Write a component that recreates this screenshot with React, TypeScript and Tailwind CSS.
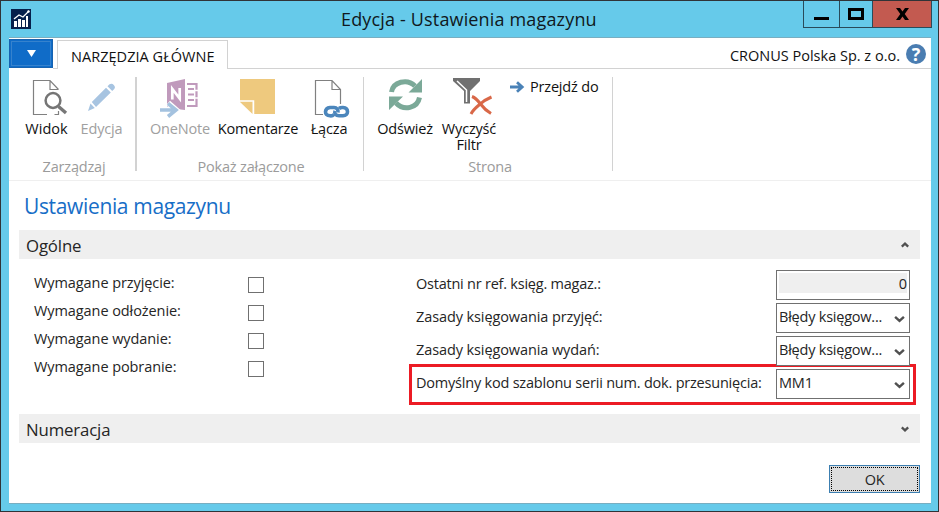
import type { ReactNode } from "react";

function Label({ children, className = "" }: { children: ReactNode; className?: string }) {
  return <span className={`block whitespace-nowrap ${className}`}>{children}</span>;
}

function PageIcon({ kind }: { kind: "view" | "link" }) {
  return (
    <svg width="40" height="40" viewBox="0 0 40 40" fill="none" className="block shrink-0">
      <path d={kind === "view" ? "M16 35.5H2.5V1.5H19L27.5 10.5M27.5 32V35.5H23.5M19 1.5V10.5H27.5" : "M13 35.5H5.5V1.5H22L30.5 10.5V25M22 1.5V10.5H30.5"} stroke="#808080" strokeWidth="1.2" />
      {kind === "view" ? (
        <>
          <circle cx="22" cy="21.5" r="7.4" fill="#fff" stroke="#757575" strokeWidth="2.5" />
          <path d="M27.5 27.5L35 34" stroke="#777" strokeWidth="3.4" />
        </>
      ) : (
        <>
          <rect x="14" y="26" width="26" height="13" rx="6" fill="#fff" />
          <g stroke="#4b86bc" strokeWidth="3.6">
            <path d="M24 35.5C22.5 37 21 37 20 36.8C13.5 36.5 14.5 29 20 28.5H24C27 28.5 28.5 31 28 33.5" />
            <path d="M29 29.5C30.5 28.3 31.5 28.4 33 28.5C39 29 39 36.5 33 36.8H29C26 36.8 24 34.5 25 31.8" />
          </g>
        </>
      )}
    </svg>
  );
}

function PencilIcon() {
  return (
    <svg width="30" height="36" viewBox="0 0 30 36" className="block" fill="#a7c4e1">
      <path d="M1 28L3.5 20.5L7.8 25ZM4.8 19L19 4.8L23.8 9.4L9 24ZM20.5 3.3L22.5 1.3Q24.8 -.2 26.8 1.9Q28.8 4.2 27.3 6L25.2 8Z" />
    </svg>
  );
}

function OneNoteIcon() {
  return (
    <svg width="40" height="40" viewBox="0 0 40 40" className="block" fill="none">
      <path d="M7 4L25 0V31L7 29Z" fill="#c09abc" />
      <path d="M12.3 20.5V10L19.7 19.5V9" stroke="#fff" strokeWidth="2.7" />
      <path d="M27 5H36.5V27H27M28 10H34M28 15.5H34M28 21H34" stroke="#c09abc" strokeWidth="2.2" />
      <path d="M34 11.5H38M34 19H38" stroke="#fff" strokeWidth="1.5" />
      <path d="M0 31H16M8 24L16 31L8 38" stroke="#fff" strokeWidth="6" />
      <path d="M0 31H15M8 24.5L16 31L8 37.5" stroke="#a4c2df" strokeWidth="3.6" />
    </svg>
  );
}

function NoteIcon() {
  return (
    <svg width="36" height="36" viewBox="0 0 36 36" className="block">
      <path d="M0 0H35V35H13V23H0Z" fill="#eec97e" />
      <path d="M0 22H13.5V35" fill="none" stroke="#fff" strokeWidth="1.5" />
      <path d="M0 23H12.5V35Z" fill="#eec97e" />
    </svg>
  );
}

function RefreshIcon() {
  return (
    <svg width="36" height="36" viewBox="0 0 36 36" className="block" fill="none">
      <g stroke="#7ba998" strokeWidth="5">
        <path d="M3.5 14C5 4 19 0 27 8" />
        <path d="M31.5 19.5C29.5 30 16 33.5 8 25" />
      </g>
      <path d="M34 1V14.5H20.5ZM1 32V18.5H15Z" fill="#7ba998" />
    </svg>
  );
}

function FilterIcon() {
  return (
    <svg width="40" height="40" viewBox="0 0 40 40" className="block" fill="none">
      <path d="M0 0H27V3L17 13V25.5H11V13L0 3Z" fill="#707070" />
      <path d="M4 3L13.5 12V24" stroke="#fff" strokeWidth="1.5" />
      <path d="M19 18.5Q23 20 27.5 26Q32 32 38 35.5M38.5 19Q31 22 26 27Q20 32 18 36" stroke="#fff" strokeWidth="5" />
      <path d="M19 18.5Q23 20 27.5 26Q32 32 38 35.5M38.5 19Q31 22 26 27Q20 32 18 36" stroke="#d96848" strokeWidth="3" />
    </svg>
  );
}

function Chevron({ up = false, small = false }: { up?: boolean; small?: boolean }) {
  return (
    <svg width={small ? 8 : 11} height={small ? 6 : 8} viewBox="0 0 10 7" fill="none" className="block shrink-0">
      <path d={up ? "M1 5.5L5 1.8L9 5.5" : "M1 1.5L5 5.2L9 1.5"} stroke="#505050" strokeWidth={small ? 2.9 : 2.2} />
    </svg>
  );
}

function ComboBox({ value }: { value: string }) {
  return (
    <div className="flex h-[30px] w-[134px] items-start justify-between border border-[#707070] bg-white pr-[4px] pl-[2px]">
      <Label className="pt-[3px] leading-[20px] tracking-[-0.22px]">{value}</Label>
      <div className="pt-[11px]"><Chevron /></div>
    </div>
  );
}

function SectionBar({ title, open = false }: { title: string; open?: boolean }) {
  return (
    <div className="flex h-[29px] items-center justify-between bg-[#efefef] pr-[11px] pl-[7px]">
      <Label className="pt-[2px] text-[16.8px] leading-[26px] tracking-[-0.15px]">{title}</Label>
      <Chevron up={open} small />
    </div>
  );
}

function TitleBar() {
  return (
    <header className="flex h-[36px] shrink-0 justify-between pr-[6px]">
      <div className="w-[340px] pt-[8px] pl-[10px]">
        <svg width="20" height="20" viewBox="0 0 20 20" className="block">
          <path d="M0 0H20V20H0Z" fill="#06204c" />
          <path d="M3 12H6V18H3ZM7 10H10V18H7ZM11 11H14V18H11ZM15 7H17V18H15Z" fill="#fff" />
          <path d="M3 10L8 6L12 8L18 2" fill="none" stroke="#fff" strokeWidth="1.3" />
          <circle cx="17.5" cy="2.5" r="1.2" fill="#fff" />
        </svg>
      </div>
      <Label className="pt-[5px] text-[18px] leading-[26px] tracking-[0.16px] text-[#101820]">Edycja - Ustawienia magazynu</Label>
      <div className="ml-auto flex h-[27px] border border-t-0 border-[#294b5a]">
        <button className="flex w-[36px] justify-center border-r border-[#294b5a] pt-[16px]"><span className="h-[3px] w-[15px] bg-black" /></button>
        <button className="flex w-[33px] justify-center border-r border-[#294b5a] pt-[7px]"><span className="h-[12px] w-[16px] border-[3px] border-black" /></button>
        <button className="flex w-[58px] justify-center bg-[#c35a50] pt-[7px]">
          <svg width="13" height="12" viewBox="0 0 13 12"><path d="M0 0H4L6.5 3.5L9 0H13L8.7 6L13 12H9L6.5 8.5L4 12H0L4.3 6Z" /></svg>
        </button>
      </div>
    </header>
  );
}

function Action({ icon, label, className, disabled = false }: { icon: ReactNode; label: ReactNode; className: string; disabled?: boolean }) {
  return (
    <div className={`flex shrink-0 flex-col items-center ${disabled ? "text-[#a0a0a0]" : "text-[#111]"} ${className}`}>
      <div className="flex h-[42px] shrink-0 items-start justify-center">{icon}</div>
      <Label className="text-center leading-[16px]">{label}</Label>
    </div>
  );
}

function Group({ title, titleClass, className, children }: { title: string; titleClass: string; className: string; children: ReactNode }) {
  return (
    <div className={`flex h-[94px] shrink-0 flex-col border-[#d2d2d2] ${className}`}>
      <div className="flex h-[80px] shrink-0 pt-[2px]">{children}</div>
      <Label className={`text-center leading-[20px] text-[#9b9b9b] ${titleClass}`}>{title}</Label>
    </div>
  );
}

function Ribbon() {
  return (
    <section className="flex h-[112px] shrink-0 border-b border-[#efefef] pt-[8px]">
      <Group title="Zarządzaj" titleClass="pl-[4px]" className="w-[128px] border-r-2 tracking-[-0.18px]">
        <Action icon={<div className="pl-[8px]"><PageIcon kind="view" /></div>} label="Widok" className="ml-[10px] w-[55px] tracking-[0px]" />
        <Action icon={<div className="pt-[4px]"><PencilIcon /></div>} label="Edycja" disabled className="w-[55px]" />
      </Group>
      <Group title="Pokaż załączone" titleClass="pl-[2px]" className="w-[227px] border-r tracking-[-0.18px]">
        <Action icon={<OneNoteIcon />} label="OneNote" disabled className="ml-[7px] w-[72px]" />
        <Action icon={<NoteIcon />} label="Komentarze" className="w-[84px]" />
        <Action icon={<div className="pl-[2px]"><PageIcon kind="link" /></div>} label="Łącza" className="w-[58px]" />
      </Group>
      <Group title="Strona" titleClass="pl-[4px]" className="w-[249px] border-r tracking-[-0.18px]">
        <Action icon={<div className="-mt-px pl-[2px]"><RefreshIcon /></div>} label="Odśwież" className="ml-[9px] w-[64px]" />
        <Action icon={<div className="-mt-px pl-[8px]"><FilterIcon /></div>} label={<>Wyczyść<br />Filtr</>} className="w-[64px]" />
        <div className="ml-[8px] flex h-[16px] items-center gap-[5px] text-[#111]">
          <svg width="16" height="12" viewBox="0 0 16 12" fill="none" stroke="#4a82b7" strokeWidth="2.8" className="block"><path d="M1 6H13M8 1.3L13.2 6L8 10.7" /></svg>
          <Label className="leading-[16px]">Przejdź do</Label>
        </div>
      </Group>
    </section>
  );
}

const requirements = ["Wymagane przyjęcie:", "Wymagane odłożenie:", "Wymagane wydanie:", "Wymagane pobranie:"];

export default function App() {
  return (
    <div className="flex h-[512px] w-[939px] flex-col overflow-hidden border border-[#303337] bg-[#66caea] font-['Open_Sans','Noto_Sans',sans-serif] text-[14.5px] text-[#252525]">
      <TitleBar />
      <main className="mr-[7px] ml-[8px] flex h-[467px] shrink-0 flex-col border-t border-b border-[#78aec1] bg-white">
        <nav className="flex h-[31px] shrink-0">
          <div className="h-[30px] w-[44px] pt-px">
            <button className="flex h-[29px] w-[44px] items-center justify-center border border-[#1762af] bg-[#106cc8] p-px">
              <span className="flex h-full w-full items-center justify-center border border-[#3682cd]">
                <svg width="9" height="7" viewBox="0 0 9 7" fill="white"><path d="M0 0H9L4.5 7Z" /></svg>
              </span>
            </button>
          </div>
          <div className="w-[4px] border-b border-[#d2d2d2]" />
          <div className="mt-[2px] w-[171px] border border-b-0 border-[#d2d2d2] pl-[13px]">
            <Label className="leading-[31px] tracking-[0.04px] text-[#111]">NARZĘDZIA GŁÓWNE</Label>
          </div>
          <div className="flex flex-1 items-center justify-end gap-[6px] border-b border-[#d2d2d2] pr-[5px]">
            <Label className="pt-[5px] tracking-[0px] text-[#111]">CRONUS Polska Sp. z o.o.</Label>
            <div className="mt-[2px] flex h-[20px] w-[20px] items-center justify-center rounded-full bg-[#4a7db1] text-[18px] leading-none font-bold text-white">?</div>
          </div>
        </nav>
        <Ribbon />
        <h1 className="h-[49px] shrink-0 pt-[11px] pl-[15px] text-[21px] leading-[29px] tracking-[-0.35px] whitespace-nowrap text-[#176ec7]">Ustawienia magazynu</h1>
        <div className="mr-[11px] ml-[10px]">
          <SectionBar title="Ogólne" open />
          <div className="flex h-[155px]">
            <div className="w-[390px] pt-[13px] pl-[15px]">
              {requirements.map((name) => (
                <div key={name} className="flex h-[28px] justify-between pr-[145px]">
                  <Label className="leading-[22px] tracking-[-0.08px]">{name}</Label>
                  <span className="mt-[5px] h-[16px] w-[16px] border border-[#707070]" />
                </div>
              ))}
            </div>
            <div className="w-[507px] pt-[11px]">
              <div className="flex h-[33px] justify-between pr-[6px] pl-[7px]">
                <Label className="leading-[27px] tracking-[-0.23px]">Ostatni nr ref. księg. magaz.:</Label>
                <div className="h-[30px] w-[134px] border border-[#707070] p-[2px] pr-[2px]">
                  <div className="h-[20px] bg-[#efefef] text-right leading-[21px]">0</div>
                </div>
              </div>
              {["Zasady księgowania przyjęć:", "Zasady księgowania wydań:"].map((name) => (
                <div key={name} className="flex h-[33px] justify-between pr-[6px] pl-[7px]">
                  <Label className="leading-[27px] tracking-[-0.1px]">{name}</Label>
                  <ComboBox value="Błędy księgow..." />
                </div>
              ))}
              <div className="-mt-[5px] flex h-[41px] justify-between border-[3px] border-[#ec1b24] py-[2px] pr-[3px] pl-[4px]">
                <Label className="leading-[27px] tracking-[-0.21px]">Domyślny kod szablonu serii num. dok. przesunięcia:</Label>
                <ComboBox value="MM1" />
              </div>
            </div>
          </div>
          <SectionBar title="Numeracja" />
          <div className="flex justify-end pt-[22px]">
            <button className="h-[28px] w-[91px] border border-[#3c7fb1] bg-[#ddd] p-px"><span className="block h-full border border-dotted border-black leading-[24px] tracking-[-0.3px]">OK</span></button>
          </div>
        </div>
      </main>
    </div>
  );
}
